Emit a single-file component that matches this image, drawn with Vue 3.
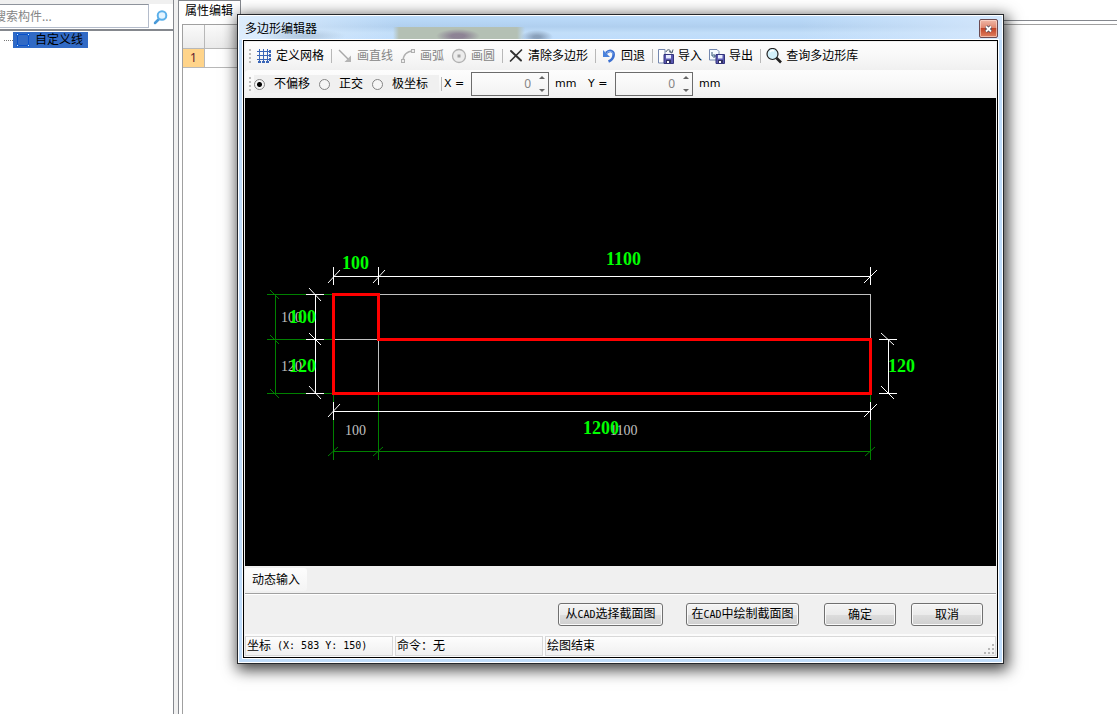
<script setup>
import { ref } from 'vue'

const keyword = ref('')
const mode = ref('free')
const offsetX = ref(0)
const offsetY = ref(0)

const tools = [
  { label: '定义网格', icon: 'grid', end: true },
  { label: '画直线', icon: 'line', disabled: true },
  { label: '画弧', icon: 'arc', disabled: true },
  { label: '画圆', icon: 'circle', disabled: true, end: true },
  { label: '清除多边形', icon: 'clear', end: true },
  { label: '回退', icon: 'undo', end: true },
  { label: '导入', icon: 'import' },
  { label: '导出', icon: 'export', end: true },
  { label: '查询多边形库', icon: 'search' },
]

const modes = [
  { value: 'free', label: '不偏移' },
  { value: 'ortho', label: '正交' },
  { value: 'polar', label: '极坐标' },
]
</script>

<template>
  <div class="page">
    <aside class="side">
      <div class="search">
        <input v-model="keyword" type="text" placeholder="搜索构件..." aria-label="搜索构件" />
        <button type="button" aria-label="搜索">
          <svg width="16" height="16" viewBox="0 0 16 16">
            <path d="M6 10L2 14" stroke="#4a9ad8" stroke-width="2.5" stroke-linecap="round" />
            <circle cx="9" cy="6.5" r="4.3" fill="#e4f4ff" stroke="#5cb0ea" stroke-width="2" />
          </svg>
        </button>
      </div>
      <div class="tree">
        <span class="twig"></span>
        <div class="node">
          <svg width="14" height="14" viewBox="0 0 14 14" shape-rendering="crispEdges">
            <path d="M1.5 1.5H12.5V12.5H1.5Z" fill="none" stroke="#0a50c8" />
            <path d="M0 0H3V3H0ZM11 0H14V3H11ZM0 11H3V14H0ZM11 11H14V14H11Z" fill="#1560d0" />
            <path d="M1 1H2V2H1ZM12 1H13V2H12ZM1 12H2V13H1ZM12 12H13V13H12Z" fill="#d8e8ff" />
          </svg>
          <span>自定义线</span>
        </div>
      </div>
    </aside>

    <main class="main">
      <div class="tabs"><button type="button" class="tab">属性编辑</button><span class="tabfill"></span></div>
      <div class="sheet">
        <div class="frame">
          <table class="props">
            <tbody>
              <tr><th></th><th></th></tr>
              <tr><td class="num">1</td><td></td></tr>
            </tbody>
          </table>
        </div>
      </div>
    </main>

    <section class="dialog" role="dialog" aria-labelledby="dlg-title">
      <header class="title">
        <h1 id="dlg-title">多边形编辑器</h1>
        <button type="button" class="close" aria-label="关闭">
          <svg width="9" height="8" viewBox="0 0 9 8">
            <path d="M2 1.5L7 6.5M7 1.5L2 6.5" stroke="#4a4a5a" stroke-width="3.4" />
            <path d="M2 1.5L7 6.5M7 1.5L2 6.5" stroke="#fff" stroke-width="1.8" />
          </svg>
        </button>
      </header>

      <div class="body">
        <div class="bar">
          <span class="grip"></span>
          <template v-for="t in tools" :key="t.label">
            <button type="button" class="tool" :disabled="t.disabled">
              <svg width="16" height="16" viewBox="0 0 16 16" fill="none">
                <g v-if="t.icon === 'grid'" shape-rendering="crispEdges">
                  <path d="M3.5 1V14M7.5 1V14M11.5 1V14M1 3.5H14M1 7.5H14M1 11.5H14" stroke="#3a66b8" />
                  <path d="M13 2H15V5H13ZM13 6H15V9H13ZM13 10H15V13H13ZM2 13H5V15H2ZM6 13H9V15H6ZM10 13H13V15H10Z" fill="#3a66b8" />
                </g>
                <g v-else-if="t.icon === 'line'" stroke="#a8a8a8">
                  <path d="M2 2L12 12" stroke-width="1.4" />
                  <path d="M14 7.5V14H7.5Z" fill="#b4b4b4" stroke="none" />
                </g>
                <g v-else-if="t.icon === 'arc'" stroke="#b0b0b0">
                  <path d="M3 13C3 7 7 3 13 3" stroke-width="1.4" />
                  <rect x="1.5" y="11.5" width="3" height="3" fill="#eee" />
                  <rect x="11.5" y="1.5" width="3" height="3" fill="#eee" />
                </g>
                <g v-else-if="t.icon === 'circle'">
                  <circle cx="8" cy="8" r="6.5" fill="#ececec" stroke="#b0b0b0" stroke-width="1.3" />
                  <rect x="6.5" y="6.5" width="3" height="3" fill="#a4a4a4" />
                </g>
                <g v-else-if="t.icon === 'clear'" stroke="#333" stroke-linecap="round">
                  <path d="M3 3L13 12.5" stroke-width="2" />
                  <path d="M13.5 2L2.5 13" stroke-width="1.7" />
                </g>
                <g v-else-if="t.icon === 'undo'">
                  <path d="M5 5C9 1 13.5 3 12.5 8C12 10.5 10 12.5 7.5 13.5" stroke="#3c70d0" stroke-width="2.6" />
                  <path d="M2 2V9H9Z" fill="#4a82dc" />
                  <path d="M6 4.5C9 2.5 12 3.5 12 6.5" stroke="#8cb4f0" />
                </g>
                <g v-else-if="t.icon === 'import'">
                  <path d="M.5 1.5H7V15H.5Z" fill="#fff" stroke="#7488b0" />
                  <path d="M6 6.5H15.5V15.5H6Z" fill="#5a58b0" stroke="#34347c" />
                  <path d="M8 7H13V10.5H8Z" fill="#e8ecff" />
                  <path d="M8 12H13V15H8Z" fill="#303060" />
                  <path d="M9 13H11V15H9Z" fill="#fff" />
                  <path d="M8 4C9 1 12 1 13 4M11 3.5L14 5L15 1.5" stroke="#456" />
                </g>
                <g v-else-if="t.icon === 'export'">
                  <path d="M.5 1.5H8L10 3.5V12H.5Z" fill="#f6faff" stroke="#7488b0" />
                  <path d="M3 4V8H6M4.5 6L6.5 8L4.5 10" stroke="#357" />
                  <path d="M7 6.5H15.5V15.5H7Z" fill="#5a58b0" stroke="#34347c" />
                  <path d="M9 7H13.5V10.5H9Z" fill="#e8ecff" />
                  <path d="M9 12H14V15H9Z" fill="#303060" />
                  <path d="M10 13H12V15H10Z" fill="#fff" />
                </g>
                <g v-else>
                  <circle cx="6.5" cy="6" r="5.5" fill="#d2f0fa" stroke="#222" stroke-width="1.2" />
                  <path d="M4 4C5 2.5 7 2.5 8 3" stroke="#fff" stroke-width="1.5" />
                  <path d="M10.5 10L15 14.5" stroke="#222" stroke-width="2.6" />
                </g>
              </svg>
              <span>{{ t.label }}</span>
            </button>
            <span v-if="t.end" class="sep"></span>
          </template>
        </div>

        <div class="bar">
          <span class="grip"></span>
          <div class="modes">
            <label v-for="m in modes" :key="m.value">
              <input v-model="mode" type="radio" name="mode" :value="m.value" />
              <span>{{ m.label }}</span>
            </label>
          </div>
          <span class="sep tight"></span>
          <label class="axis" for="off-x">X =</label>
          <div class="spin">
            <input id="off-x" v-model="offsetX" type="text" />
            <span class="arrows">
              <button type="button" class="up" aria-label="增加 X"></button>
              <button type="button" class="down" aria-label="减少 X"></button>
            </span>
          </div>
          <span class="unit">mm</span>
          <label class="axis" for="off-y">Y =</label>
          <div class="spin">
            <input id="off-y" v-model="offsetY" type="text" />
            <span class="arrows">
              <button type="button" class="up" aria-label="增加 Y"></button>
              <button type="button" class="down" aria-label="减少 Y"></button>
            </span>
          </div>
          <span class="unit">mm</span>
        </div>

        <svg class="canvas" viewBox="245 98 751 468" fill="none">
          <g shape-rendering="crispEdges">
            <path stroke="#c0c0c0" d="M333 294.5H870.5V339M333 339.5H378.5M378.5 339V393" />
            <path stroke="#008000" d="M275.5 294V393M267 294.5H333M267 339.5H333M267 393.5H333M333.5 393V460M378.5 393V460M870.5 393V460M333 451.5H870" />
            <path stroke="#fff" d="M333 276.5H870M333.5 267V285M378.5 267V285M870.5 267V285M333 411.5H870M333.5 402V420M870.5 402V420M315.5 294V393M306 294.5H324M306 339.5H324M306 393.5H324M888.5 339V393M879 339.5H897M879 393.5H897" />
          </g>
          <path stroke="#008000" d="M270 290L279 299M270 335L279 344M270 389L279 398M328 456L338 447M373 456L383 447M865 456L875 447" />
          <path stroke="#fff" d="M328 283L340 270M373 283L385 270M864 283L877 270M328 417L340 404M864 417L877 404M309 288L321 301M309 333L321 345M309 386L321 399M881 333L894 345M881 386L894 399" />
          <path shape-rendering="crispEdges" stroke="#f00" stroke-width="3" d="M333.5 294.5H378.5V339.5H870.5V393.5H333.5Z" />
          <g class="small">
            <text x="281" y="322">100</text>
            <text x="281" y="371">120</text>
            <text x="345" y="435">100</text>
            <text x="610" y="435">1100</text>
          </g>
          <g class="big">
            <text x="342" y="269">100</text>
            <text x="606" y="265">1100</text>
            <text x="289" y="323">100</text>
            <text x="289" y="372">120</text>
            <text x="888" y="372">120</text>
            <text x="583" y="434">1200</text>
          </g>
        </svg>

        <div class="dynamic"><button type="button">动态输入</button></div>

        <div class="actions">
          <button type="button" class="btn pick">从<span class="half">CAD</span>选择截面图</button>
          <button type="button" class="btn draw">在<span class="half">CAD</span>中绘制截面图</button>
          <button type="button" class="btn">确定</button>
          <button type="button" class="btn">取消</button>
        </div>

        <footer class="status">
          <span class="cell">坐标<span class="half">&nbsp;(X: 583 Y: 150)</span></span>
          <span class="cell">命令：无</span>
          <span class="cell last">绘图结束
            <svg width="11" height="11" viewBox="0 0 11 11" shape-rendering="crispEdges">
              <path fill="#b8b8b8" d="M8 0H10V2H8ZM4 4H6V6H4ZM8 4H10V6H8ZM0 8H2V10H0ZM4 8H6V10H4ZM8 8H10V10H8Z" />
            </svg>
          </span>
        </footer>
      </div>
    </section>
  </div>
</template>

<style>
body {
  overflow: hidden;
}
</style>

<style scoped>
.page {
  position: relative;
  display: flex;
  gap: 4px;
  min-height: 100vh;
  background: #f0f0f0;
  color: #000;
  font: 12px/16px "Noto Sans", "Noto Sans CJK SC", sans-serif;
}
.page * {
  box-sizing: border-box;
}
button,
input {
  margin: 0;
  padding: 0;
  border: 0;
  background: none;
  color: inherit;
  font: inherit;
}

.side {
  display: flex;
  flex-direction: column;
  width: 174px;
  padding-top: 4px;
  border-right: 1px solid #85888e;
}
.search {
  display: flex;
  height: 27px;
  border-bottom: 2px solid #85888e;
  background: #fff;
}
.search input {
  flex: 1;
  min-width: 0;
  height: 24px;
  border: 1px solid #b4bccb;
  border-top-color: #8e939c;
  border-left: 0;
  text-indent: -6px;
}
.search input::placeholder {
  color: #858585;
  opacity: 1;
}
.search button {
  display: flex;
  align-items: center;
  justify-content: center;
  width: 24px;
}
.tree {
  display: flex;
  flex: 1;
  align-items: flex-start;
  padding: 1px 0 0 4px;
  background: #fff;
}
.twig {
  width: 9px;
  margin-top: 8px;
  border-top: 1px dotted #777;
}
.node {
  display: flex;
  align-items: center;
  gap: 5px;
  height: 16px;
  padding: 0 5px 0 3px;
  background: #316ac5;
}

.main {
  display: flex;
  flex: 1;
  flex-direction: column;
}
.tabs {
  display: flex;
  height: 21px;
}
.tab {
  padding: 0 7px 0 6px;
  border: 1px solid #85888e;
  border-bottom: 0;
  background: #fff;
}
.tabfill {
  flex: 1;
  border-bottom: 1px solid #85888e;
  background: #fff;
}
.sheet {
  display: flex;
  flex: 1;
  padding: 3px 0 0 3px;
  border-left: 1px solid #85888e;
  background: #fff;
}
.frame {
  flex: 1;
  border: 1px solid #a0a0a0;
  border-right: 0;
  border-bottom: 0;
}
.props {
  border-spacing: 0;
}
.props th,
.props td {
  width: 60px;
  height: 24px;
  padding: 0;
  border: 0 solid #b8b8b8;
  border-width: 0 1px 1px 0;
}
.props th {
  background: linear-gradient(#fafafa, #eaeaea);
}
.props td {
  height: 19px;
}
.props th:first-child,
.props .num {
  width: 22px;
}
.props .num {
  background: #ffd48a;
  color: #602030;
  text-align: center;
}

.dialog {
  position: absolute;
  top: 14px;
  right: 113px;
  left: 237px;
  padding: 0 5px 5px;
  border: 1px solid #25282c;
  background: #bfdcfa;
  box-shadow: inset 0 0 0 1px #fff, 2px 4px 14px 2px rgba(0, 0, 0, 0.75);
}
.title {
  display: flex;
  align-items: center;
  justify-content: space-between;
  height: 24px;
  margin: 1px -4px 0;
  padding: 1px 4px 0 6px;
  background:
    radial-gradient(ellipse 22px 7px at 219px 20px, rgba(125, 105, 135, 0.7) 30%, transparent),
    radial-gradient(ellipse 16px 7px at 298px 21px, rgba(115, 135, 160, 0.7) 20%, transparent),
    radial-gradient(ellipse 42px 7px at 65px 20px, rgba(150, 175, 200, 0.6), transparent),
    linear-gradient(90deg, transparent 154px, #b4c0b4 160px, #b4c0b4 278px, transparent 286px) 0 11px / 100% 14px no-repeat,
    linear-gradient(90deg, rgba(225, 239, 253, 0.9), transparent 160px, transparent 560px, rgba(214, 232, 252, 0.9)),
    linear-gradient(#bcdcfb, #b0cfef 45%, #c2def9 70%, #bedcfc);
}
.title h1 {
  margin: 0;
  font: inherit;
}
.close {
  display: flex;
  align-items: center;
  justify-content: center;
  width: 19px;
  height: 19px;
  border: 1px solid #6b4a50;
  border-radius: 2px;
  background: linear-gradient(#f0b8a8, #e08870 45%, #c04428 50%, #e08060);
  box-shadow: inset 0 0 0 1px rgba(255, 225, 215, 0.6);
}
.body {
  padding: 1px 1px 0;
  border: 1px solid #000;
  outline: 1px solid #fff;
  background: #f0f0f0;
}

.bar {
  display: flex;
  align-items: center;
  height: 28px;
  padding-left: 4px;
  border-radius: 4px 0 0 4px;
  background: linear-gradient(#fdfdfd, #f8f8f8 50%, #f0f0f0);
}
.grip {
  width: 2px;
  height: 14px;
  margin-right: 5px;
  background: repeating-linear-gradient(#bcbcbc 0 2px, transparent 2px 4px);
}
.tool {
  display: flex;
  align-items: center;
  gap: 4px;
  margin-right: 7px;
  white-space: nowrap;
}
.tool:disabled {
  color: #858585;
}
.sep {
  width: 1px;
  height: 14px;
  margin-right: 5px;
  background: #b8b8b8;
}
.sep.tight {
  margin: 0 2px;
}
.modes {
  display: flex;
  align-items: center;
  gap: 9px;
  height: 18px;
  margin-left: -2px;
  padding-right: 11px;
  background: #f0f0f0;
}
.modes label {
  display: flex;
  align-items: center;
  gap: 9px;
}
.modes input {
  appearance: none;
  width: 11px;
  height: 11px;
  border: 1px solid #858585;
  border-radius: 50%;
  background: #f6f6f6;
}
.modes input:checked {
  background: radial-gradient(circle, #000 0 2px, #f6f6f6 3px);
}
.axis,
.unit {
  font-family: "DejaVu Sans", sans-serif;
  font-size: 11px;
}
.axis {
  width: 27px;
}
.spin {
  display: flex;
  width: 78px;
  height: 24px;
  border: 1px solid #6c6c6c;
}
.spin input {
  flex: 1;
  min-width: 0;
  color: #858585;
  text-align: right;
}
.arrows {
  display: flex;
  flex-direction: column;
  justify-content: space-between;
  width: 17px;
  padding: 3px 3px 3px 8px;
}
.up,
.down {
  width: 0;
  height: 0;
  border: 3px solid transparent;
}
.up {
  border-top: 0;
  border-bottom-color: #666;
}
.down {
  border-bottom: 0;
  border-top-color: #666;
}
.unit {
  width: 39px;
  padding-left: 6px;
}

.canvas {
  display: block;
  width: 100%;
  background: #000;
}
.small {
  fill: #c0c0c0;
  font: 14px "Liberation Serif", serif;
}
.big {
  fill: #0f0;
  font: bold 18px "Liberation Serif", serif;
}

.dynamic {
  height: 28px;
  padding-top: 2px;
  border-bottom: 1px solid #a0a0a0;
}
.dynamic button {
  height: 23px;
  padding: 0 7px;
  border-radius: 3px;
  background: linear-gradient(#fdfdfd, #f4f4f4);
}
.actions {
  display: flex;
  justify-content: flex-end;
  gap: 15px;
  padding: 8px 13px;
  border-top: 1px solid #fff;
}
.btn {
  width: 72px;
  height: 23px;
  border: 1px solid #707070;
  border-radius: 3px;
  background: linear-gradient(#f4f4f4, #ebebeb 50%, #dddddd 52%, #cfcfcf);
  box-shadow: inset 0 0 0 1px #fafafa;
  white-space: nowrap;
}
.pick {
  width: 105px;
  margin-right: 8px;
}
.draw {
  width: 113px;
  margin-right: 10px;
}
.half {
  font-family: "DejaVu Sans Mono", monospace;
  font-size: 10px;
}
.status {
  display: flex;
  gap: 2px;
  padding: 2px 0 1px;
  background: #fbfbfb;
}
.cell {
  display: flex;
  align-items: center;
  width: 148px;
  height: 20px;
  padding-left: 1px;
  border: 1px solid #d8d8d8;
  background: linear-gradient(#fdfdfd, #f0f0f0);
  white-space: nowrap;
}
.last {
  flex: 1;
  justify-content: space-between;
}
.last svg {
  align-self: flex-end;
}
</style>
